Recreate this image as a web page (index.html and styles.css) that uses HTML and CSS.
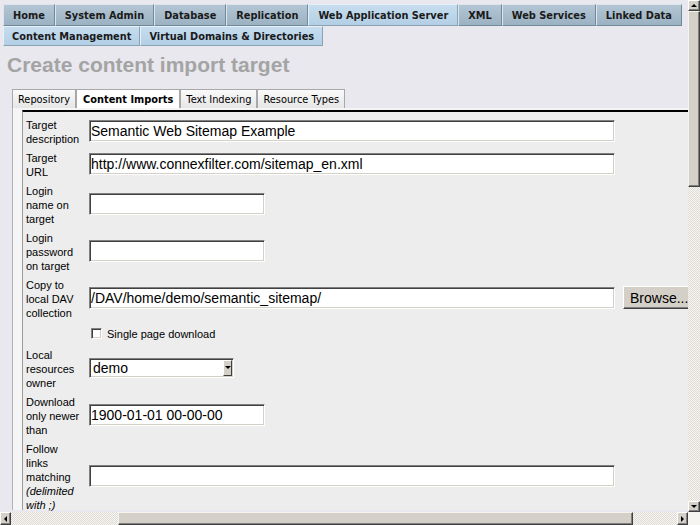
FILE: index.html
```html
<!DOCTYPE html>
<html>
<head>
<meta charset="utf-8">
<title>Create content import target</title>
<link rel="stylesheet" href="styles.css">
</head>
<body>
<div class="screen">
  <div class="viewport">
    <nav class="maintabs">
      <div class="tabrow row1">
        <span class="tab">Home</span>
        <span class="tab">System Admin</span>
        <span class="tab">Database</span>
        <span class="tab">Replication</span>
        <span class="tab active">Web Application Server</span>
        <span class="tab">XML</span>
        <span class="tab">Web Services</span>
        <span class="tab">Linked Data</span>
      </div>
      <div class="tabrow row2">
        <span class="tab active">Content Management</span>
        <span class="tab active">Virtual Domains &amp; Directories</span>
      </div>
    </nav>

    <h1 class="title">Create content import target</h1>

    <div class="subtabs">
      <span class="subtab">Repository</span>
      <span class="subtab current">Content Imports</span>
      <span class="subtab">Text Indexing</span>
      <span class="subtab">Resource Types</span>
    </div>

    <div class="panel">
      <div class="form">
        <div class="label">Target<br>description</div>
        <div class="field"><input class="text long" type="text" value="Semantic Web Sitemap Example"></div>

        <div class="label">Target<br>URL</div>
        <div class="field"><input class="text long" type="text" value="http://www.connexfilter.com/sitemap_en.xml"></div>

        <div class="label">Login<br>name on<br>target</div>
        <div class="field"><input class="text short" type="text" value=""></div>

        <div class="label">Login<br>password<br>on target</div>
        <div class="field"><input class="text short" type="password" value=""></div>

        <div class="label">Copy to<br>local DAV<br>collection</div>
        <div class="field inline"><input class="text long" type="text" value="/DAV/home/demo/semantic_sitemap/"><button class="browse" type="button">Browse...</button></div>

        <div class="label"></div>
        <div class="field check"><span class="checkbox"></span><span>Single page download</span></div>

        <div class="label">Local<br>resources<br>owner</div>
        <div class="field"><div class="select"><span class="select-value">demo</span><span class="select-btn"><span class="tri-down"></span></span></div></div>

        <div class="label">Download<br>only newer<br>than</div>
        <div class="field"><input class="text short" type="text" value="1900-01-01 00-00-00"></div>

        <div class="label">Follow<br>links<br>matching<br><i>(delimited<br>with ;)</i></div>
        <div class="field"><input class="text long" type="text" value=""></div>
      </div>
    </div>
  </div>

  <div class="vscroll">
    <span class="sbtn vbtn"><span class="tri-up"></span></span>
    <span class="vthumb"></span>
    <span class="track"></span>
    <span class="sbtn vbtn"><span class="tri-down"></span></span>
  </div>
  <div class="hscroll">
    <span class="sbtn hbtn"><span class="tri-left"></span></span>
    <span class="track hlead"></span>
    <span class="hthumb"></span>
    <span class="track"></span>
    <span class="sbtn hbtn"><span class="tri-right"></span></span>
  </div>
  <div class="corner"></div>
</div>
</body>
</html>
```

FILE: styles.css
```css
html, body {
  margin: 0;
  padding: 0;
}

.screen {
  width: 700px;
  height: 525px;
  display: grid;
  grid-template-columns: 688px 12px;
  grid-template-rows: 512px 13px;
  overflow: hidden;
}

.viewport {
  overflow: hidden;
  background: #e8e8ee;
  padding: 4px 0 0 3px;
  box-sizing: border-box;
  font-family: "DejaVu Sans", Verdana, sans-serif;
}

/* main tabs */
.tabrow {
  display: flex;
  white-space: nowrap;
}

.tab {
  box-sizing: border-box;
  display: flex;
  align-items: center;
  padding: 0 9px;
  font-size: 9.8px;
  font-weight: bold;
  color: #1a1a1a;
  border: 1px solid;
  border-color: #dde6ee #71899a #71899a #dde6ee;
  background: linear-gradient(#b3c6d4, #9bb2c3);
}

.row1 .tab {
  height: 22px;
}

.row2 .tab {
  height: 20px;
  padding: 0 8px;
}

.tab.active {
  background: linear-gradient(#c6ddee, #b3cfe5);
  border-color: #e6f0f8 #8aa2b4 #8aa2b4 #e6f0f8;
}

.title {
  margin: 7px 0 0 4px;
  font-family: "Liberation Sans", Arial, sans-serif;
  font-size: 21px;
  line-height: 24px;
  font-weight: bold;
  color: #a4a4a4;
}

/* sub tabs */
.subtabs {
  display: flex;
  margin: 12px 0 0 9px;
  height: 19px;
}

.subtab {
  box-sizing: border-box;
  display: flex;
  align-items: center;
  padding: 0 5px;
  font-size: 9.8px;
  color: #000;
  border: 1px solid #a8a8a8;
  border-bottom: none;
  background: linear-gradient(#fafafa, #e6e6e6);
}

.subtab.current {
  font-weight: bold;
  background: #ffffff;
  padding: 0 6px;
}

.panel {
  margin-left: 9px;
  border-left: 1px solid #b2b2b2;
  background: #f5f5f5;
  padding: 2px 0 0 9px;
  height: 400px;
}

.form {
  display: grid;
  grid-template-columns: 60px auto;
  column-gap: 3px;
  row-gap: 5px;
  align-items: center;
  justify-items: start;
  background: #ededed;
  border-left: 1px solid #9c9c9c;
  border-top: 2px solid #000;
  padding: 6px 0 10px 3px;
  font-family: "Liberation Sans", Arial, sans-serif;
  font-size: 11px;
  line-height: 14px;
  color: #000;
  height: 400px;
  box-sizing: border-box;
  align-content: start;
}

.label {
  white-space: nowrap;
}

.field {
  display: flex;
  align-items: center;
  margin-bottom: 3px;
}

.text {
  box-sizing: border-box;
  height: 22px;
  margin: 0;
  padding: 0 1px;
  border: 1px solid;
  border-color: #808080 #ffffff #ffffff #808080;
  box-shadow: inset 1px 1px #404040, inset -1px -1px #d4d0c8;
  background: #fff;
  font-family: "Liberation Sans", Arial, sans-serif;
  font-size: 14px;
  color: #000;
  outline: none;
}

.long {
  width: 526px;
}

.short {
  width: 176px;
}

.inline {
  gap: 8px;
}

.browse {
  box-sizing: border-box;
  flex: none;
  height: 23px;
  margin: 0;
  padding: 0 6px 0 6px;
  border: 1px solid;
  border-color: #ffffff #404040 #404040 #ffffff;
  box-shadow: inset -1px -1px #808080;
  background: #d4d0c8;
  font-family: "Liberation Sans", Arial, sans-serif;
  font-size: 14px;
  color: #000;
  white-space: nowrap;
}

.check {
  gap: 5px;
  margin: 0 0 0 2px;
  height: 18px;
}

.checkbox {
  box-sizing: border-box;
  width: 11px;
  height: 11px;
  border: 1px solid;
  border-color: #808080 #ffffff #ffffff #808080;
  box-shadow: inset 1px 1px #404040, inset -1px -1px #d4d0c8;
  background: #fff;
  margin-bottom: 2px;
}

.select {
  box-sizing: border-box;
  width: 145px;
  height: 20px;
  display: flex;
  align-items: stretch;
  border: 1px solid;
  border-color: #808080 #ffffff #ffffff #808080;
  box-shadow: inset 1px 1px #404040, inset -1px -1px #d4d0c8;
  background: #fff;
  padding: 1px;
}

.select-value {
  flex: 1;
  font-size: 14px;
  line-height: 17px;
  padding-left: 2px;
}

.select-btn {
  box-sizing: border-box;
  width: 9px;
  display: flex;
  align-items: center;
  justify-content: center;
  background: #d4d0c8;
  border: 1px solid;
  border-color: #ffffff #404040 #404040 #ffffff;
}

/* scrollbars */
.vscroll {
  display: flex;
  flex-direction: column;
  background: #f3f2ef;
}

.hscroll {
  display: flex;
  background: #f3f2ef;
}

.track {
  flex: 1;
  background: repeating-conic-gradient(#dedbd5 0 25%, #f7f6f4 0 50%) 0 0 / 2px 2px;
}

.sbtn {
  box-sizing: border-box;
  flex: none;
  display: flex;
  align-items: center;
  justify-content: center;
  background: #d4d0c8;
  border: 1px solid;
  border-color: #ffffff #404040 #404040 #ffffff;
  box-shadow: inset -1px -1px #808080;
}

.vbtn {
  width: 12px;
  height: 11px;
}

.hbtn {
  width: 11px;
  height: 13px;
}

.vthumb {
  box-sizing: border-box;
  flex: none;
  height: 176px;
  background: #d4d0c8;
  border: 1px solid;
  border-color: #f4f3ee #404040 #404040 #f4f3ee;
  box-shadow: inset -1px -1px #808080;
}

.hthumb {
  box-sizing: border-box;
  flex: none;
  width: 515px;
  background: #d4d0c8;
  border: 1px solid;
  border-color: #f4f3ee #404040 #404040 #f4f3ee;
  box-shadow: inset -1px -1px #808080;
}

.hlead {
  flex: none;
  width: 107px;
}

.corner {
  background: #f6f5f2;
}

.tri-up, .tri-down, .tri-left, .tri-right {
  width: 0;
  height: 0;
  border: 3px solid transparent;
}

.tri-up {
  border-bottom-color: #000;
  border-top-width: 0;
}

.tri-down {
  border-top-color: #000;
  border-bottom-width: 0;
}

.tri-left {
  border-right-color: #000;
  border-left-width: 0;
}

.tri-right {
  border-left-color: #000;
  border-right-width: 0;
}
```
